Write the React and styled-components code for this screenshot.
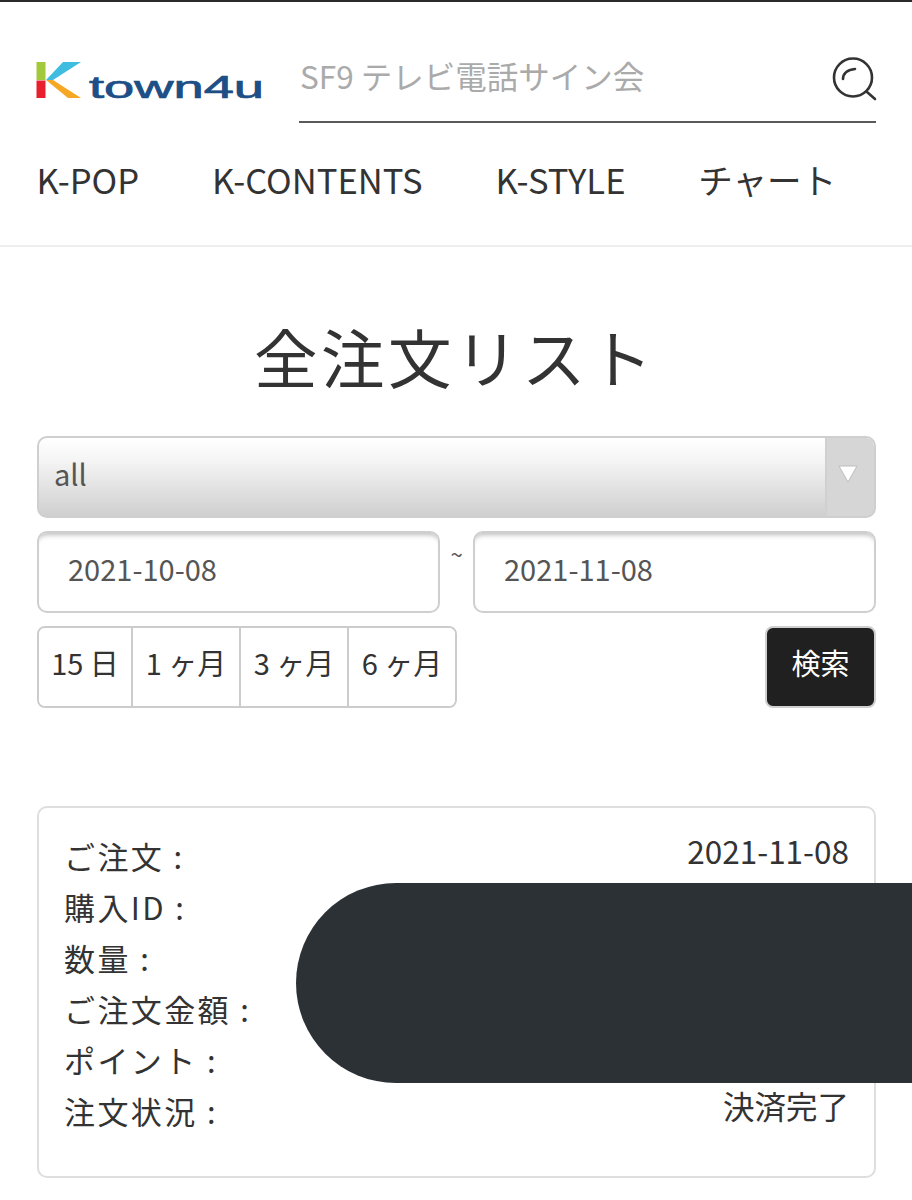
import React from "react";
import styled, { createGlobalStyle } from "styled-components";

const GlobalStyle = createGlobalStyle`
  * { box-sizing: border-box; }
  html, body { margin: 0; padding: 0; background: #fff; }
  body {
    font-family: "Noto Sans CJK JP", "Noto Sans", sans-serif;
    color: #333;
  }
`;

const Page = styled.div`
  position: relative;
  width: 912px;
  height: 1200px;
  overflow: hidden;
  border-top: 2px solid #2a2a2a;
`;

const Header = styled.header`
  height: 245px;
  padding: 0 36px 0 36px;
  border-bottom: 2px solid #eeeeee;
`;

const SearchRow = styled.div`
  display: flex;
  align-items: flex-start;
  gap: 35px;
  padding-top: 51px;
`;

const LogoBox = styled.div`
  width: 228px;
  padding-top: 9px;
  flex: none;
`;

const SearchBox = styled.div`
  flex: 1;
  height: 70px;
  display: flex;
  justify-content: space-between;
  border-bottom: 2px solid #5a5a5a;
`;

const SearchText = styled.span`
  font-size: 31.5px;
  line-height: 45px;
  color: #aaa;
  padding-left: 1px;
`;

const SearchIcon = styled.svg`
  width: 46px;
  height: 46px;
  margin-top: 3px;
  margin-right: -1px;
`;

const Nav = styled.nav`
  display: flex;
  gap: 72.8px;
  padding: 31px 0 0 0.5px;
`;

const NavItem = styled.a`
  font-size: 34.6px;
  line-height: 50px;
  color: #333;
`;

const Main = styled.main`
  padding: 0 36px 0 37px;
`;

const Title = styled.h1`
  margin: 0;
  padding: 62px 3px 0 0;
  height: 189px;
  font-size: 63.5px;
  line-height: 92px;
  font-weight: 400;
  letter-spacing: 3.5px;
  text-align: center;
  color: #333;
`;

const SelectBar = styled.div`
  height: 82px;
  display: flex;
  border: 2px solid #cfcfcf;
  border-radius: 10px;
  overflow: hidden;
  background: linear-gradient(#ffffff 0%, #f4f4f4 30%, #cfcfcf 100%);
`;

const SelectValue = styled.span`
  flex: 1;
  padding-left: 15px;
  font-size: 29px;
  line-height: 71px;
  color: #555;
`;

const SelectArrow = styled.span`
  width: 49px;
  padding-right: 5px;
  display: flex;
  align-items: center;
  justify-content: center;
  background: #d6d6d6;
  border-left: 2px solid #d0d0d0;
`;

const ArrowGlyph = styled.svg`
  width: 20px;
  height: 18px;
  margin-top: -6px;
`;

const DateRow = styled.div`
  display: flex;
  margin-top: 13px;
`;

const DateField = styled.div`
  flex: 1;
  height: 82px;
  padding-left: 29px;
  border: 2px solid #cfcfcf;
  border-radius: 10px;
  font-size: 29px;
  line-height: 71px;
  color: #555;
  box-shadow: inset 0 6px 5px -4px #bdbdbd;
`;

const Tilde = styled.span`
  width: 33px;
  flex: none;
  text-align: center;
  font-size: 22px;
  line-height: 44px;
  color: #555;
`;

const FilterRow = styled.div`
  display: flex;
  justify-content: space-between;
  margin-top: 13px;
`;

const PeriodGroup = styled.div`
  display: flex;
  height: 82px;
  border: 2px solid #cccccc;
  border-radius: 8px;
  overflow: hidden;
`;

const PeriodButton = styled.button`
  width: ${(p) => p.$width}px;
  padding: 0 0 10px;
  border: 0;
  border-left: ${(p) => (p.$first ? "0" : "2px solid #cccccc")};
  background: #fff;
  font-family: inherit;
  font-size: 29px;
  color: #333;
  white-space: nowrap;
`;

const SearchButton = styled.button`
  width: 111px;
  height: 82px;
  padding: 0 0 10px;
  border: 2px solid #cfcfcf;
  border-radius: 8px;
  background: #202020;
  font-family: inherit;
  font-size: 29px;
  color: #fff;
`;

const OrderCard = styled.section`
  margin-top: 98px;
  height: 372px;
  padding: 22px 25px 0 25px;
  border: 2px solid #dedede;
  border-radius: 10px;
`;

const OrderRow = styled.div`
  display: flex;
  justify-content: space-between;
  height: 51px;
  font-size: 31px;
  line-height: 51px;
`;

const OrderLabel = styled.span`
  color: #333;
  letter-spacing: 2.4px;
`;

const OrderValue = styled.span`
  color: #333;
  font-size: 31.5px;
  margin-top: -5px;
`;

const Redaction = styled.div`
  position: absolute;
  left: 296px;
  top: 881px;
  width: 616px;
  height: 200px;
  border-radius: 100px 0 0 100px;
  background: #2c3136;
`;

function Logo() {
  return (
    <svg width="228" height="46" viewBox="0 0 228 46">
      <rect x="0.5" y="0" width="9" height="18" fill="#a2c93c" />
      <rect x="0.5" y="18.5" width="9" height="17.5" fill="#e8202e" />
      <polygon points="10,18 27,0 45,0 17,18" fill="#3fbde0" />
      <polygon points="10,18 17,18 45,36 32,36" fill="#f6a724" />
      <text
        x="53"
        y="36"
        textLength="175"
        lengthAdjust="spacingAndGlyphs"
        fontFamily="'Liberation Sans', sans-serif"
        fontSize="31"
        fontWeight="400"
        fill="#1d4f86"
        stroke="#1d4f86"
        strokeWidth="0.7"
      >
        town4u
      </text>
    </svg>
  );
}

const orders = [
  { label: "ご注文 :", value: "2021-11-08" },
  { label: "購入ID :" },
  { label: "数量 :" },
  { label: "ご注文金額 :" },
  { label: "ポイント :" },
  { label: "注文状況 :", value: "決済完了" },
];

export default function App() {
  return (
    <Page>
      <GlobalStyle />
      <Header>
        <SearchRow>
          <LogoBox>
            <Logo />
          </LogoBox>
          <SearchBox>
            <SearchText>SF9 テレビ電話サイン会</SearchText>
            <SearchIcon viewBox="0 0 46 46" fill="none" stroke="#333" strokeWidth="2.6" strokeLinecap="round">
              <circle cx="22" cy="21.5" r="19" />
              <path d="M12 23c0-5 4-9 12-10" />
              <path d="M36 36l8 7" />
            </SearchIcon>
          </SearchBox>
        </SearchRow>
        <Nav>
          <NavItem>K-POP</NavItem>
          <NavItem>K-CONTENTS</NavItem>
          <NavItem>K-STYLE</NavItem>
          <NavItem>チャート</NavItem>
        </Nav>
      </Header>
      <Main>
        <Title>全注文リスト</Title>
        <SelectBar>
          <SelectValue>all</SelectValue>
          <SelectArrow>
            <ArrowGlyph viewBox="0 0 20 18">
              <polygon points="1,1 19,1 10,17" fill="#fff" stroke="#bdbdbd" strokeWidth="1" />
            </ArrowGlyph>
          </SelectArrow>
        </SelectBar>
        <DateRow>
          <DateField>2021-10-08</DateField>
          <Tilde>~</Tilde>
          <DateField>2021-11-08</DateField>
        </DateRow>
        <FilterRow>
          <PeriodGroup>
            <PeriodButton $first $width={92}>15 日</PeriodButton>
            <PeriodButton $width={108}>1 ヶ月</PeriodButton>
            <PeriodButton $width={108}>3 ヶ月</PeriodButton>
            <PeriodButton $width={108}>6 ヶ月</PeriodButton>
          </PeriodGroup>
          <SearchButton>検索</SearchButton>
        </FilterRow>
        <OrderCard>
          {orders.map((o) => (
            <OrderRow key={o.label}>
              <OrderLabel>{o.label}</OrderLabel>
              {o.value && <OrderValue>{o.value}</OrderValue>}
            </OrderRow>
          ))}
        </OrderCard>
      </Main>
      <Redaction />
    </Page>
  );
}
